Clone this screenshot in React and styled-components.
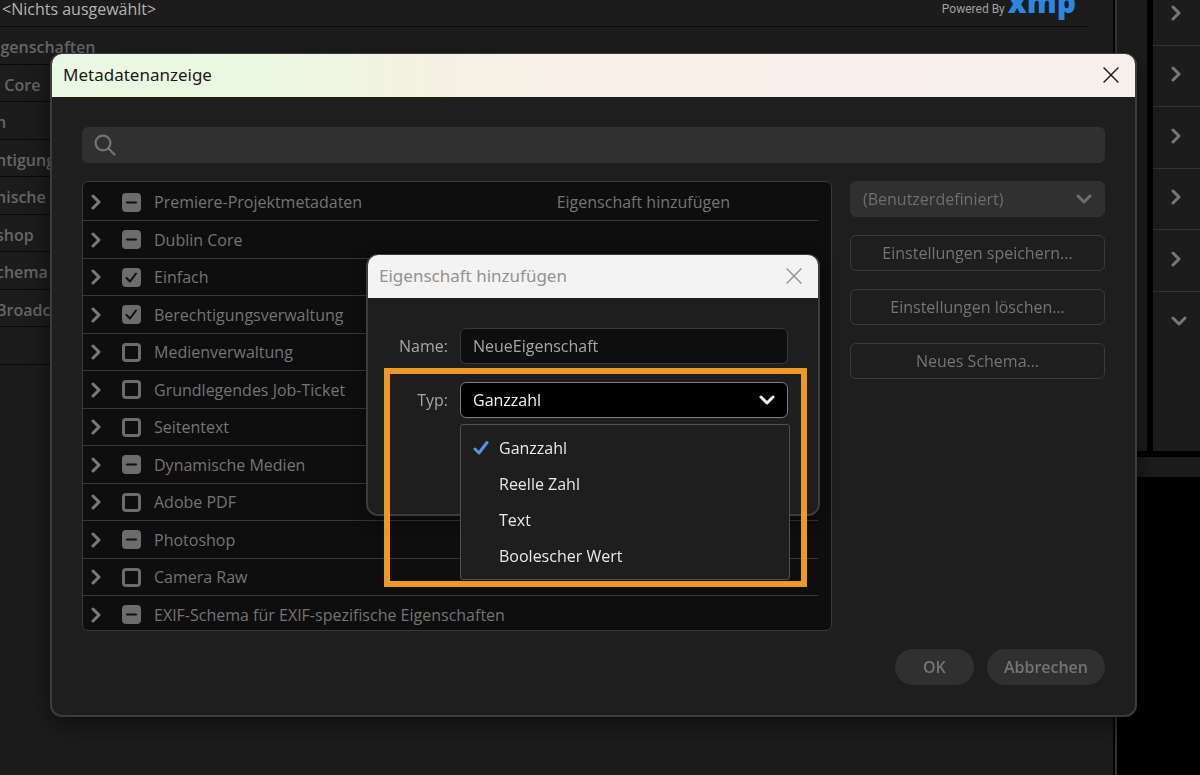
import React, { useState } from 'react';
import styled, { createGlobalStyle, css } from 'styled-components';

const GlobalStyle = createGlobalStyle`
  * {
    box-sizing: border-box;
  }

  body {
    margin: 0;
    overflow: hidden;
    background: #000;
    font-family: 'Open Sans', 'Noto Sans', sans-serif;
    font-size: 16px;
    color: #747474;
  }

  button, input, select {
    font: inherit;
    color: inherit;
    margin: 0;
  }
`;

const BACKGROUND_ROWS = [
  'igenschaften',
  '  Core',
  'n',
  'htigung',
  'nische Medien',
  'shop',
  'chema',
  'Broadcast',
  '',
];

const SCHEMAS = [
  { label: 'Premiere-Projektmetadaten', state: 'mixed', action: 'Eigenschaft hinzufügen' },
  { label: 'Dublin Core', state: 'mixed' },
  { label: 'Einfach', state: 'on' },
  { label: 'Berechtigungsverwaltung', state: 'on' },
  { label: 'Medienverwaltung', state: 'off' },
  { label: 'Grundlegendes Job-Ticket', state: 'off' },
  { label: 'Seitentext', state: 'off' },
  { label: 'Dynamische Medien', state: 'mixed' },
  { label: 'Adobe PDF', state: 'off' },
  { label: 'Photoshop', state: 'mixed' },
  { label: 'Camera Raw', state: 'off' },
  { label: 'EXIF-Schema für EXIF-spezifische Eigenschaften', state: 'mixed' },
];

const TYPES = ['Ganzzahl', 'Reelle Zahl', 'Text', 'Boolescher Wert'];

function Chevron({ down }) {
  return (
    <svg width='16' height='16' viewBox='0 0 16 16' fill='none' stroke='currentColor' strokeWidth='3' strokeLinecap='round' strokeLinejoin='round'>
      <path d={down ? 'M2 5l6 6 6-6' : 'M4 2l6 6-6 6'} />
    </svg>
  );
}

function CloseIcon() {
  return (
    <svg width='16' height='16' viewBox='0 0 16 16' fill='none' stroke='currentColor' strokeWidth='1.4'>
      <path d='M0.6 0.6l14.8 14.8M15.4 0.6L0.6 15.4' />
    </svg>
  );
}

function SchemaRow({ label, state, action }) {
  const [checked, setChecked] = useState(state === 'on');

  return (
    <Row>
      <IconButton type='button' aria-label={`${label} öffnen`}>
        <Chevron />
      </IconButton>
      <CheckLabel>
        <Checkbox
          type='checkbox'
          $mixed={state === 'mixed'}
          checked={checked}
          onChange={() => setChecked(!checked)}
        />
        {label}
      </CheckLabel>
      {action && <LinkButton type='button'>{action}</LinkButton>}
    </Row>
  );
}

function PropertyDialog() {
  const [type, setType] = useState(TYPES[0]);

  return (
    <SmallDialog role='dialog' aria-label='Eigenschaft hinzufügen'>
      <TitleBar $muted>
        Eigenschaft hinzufügen
        <CloseButton type='button' aria-label='Schließen'>
          <CloseIcon />
        </CloseButton>
      </TitleBar>
      <Form>
        <label htmlFor='name'>Name:</label>
        <NameInput id='name' type='text' defaultValue='NeueEigenschaft' />
        <label htmlFor='type'>Typ:</label>
        <SelectWrapper $active>
          <Select id='type' value={type} onChange={e => setType(e.target.value)} $active>
            {TYPES.map(item => <option key={item}>{item}</option>)}
          </Select>
          <Chevron down />
          <Menu role='listbox'>
            {TYPES.map(item => (
              <MenuItem key={item} role='option' aria-selected={item === type} onClick={() => setType(item)}>
                {item === type && (
                  <svg width='16' height='16' viewBox='0 0 16 16' fill='none' stroke='#4f97e3' strokeWidth='3' strokeLinecap='round' strokeLinejoin='round'>
                    <path d='M2 9l4 4 8-10.5' />
                  </svg>
                )}
                <span>{item}</span>
              </MenuItem>
            ))}
          </Menu>
        </SelectWrapper>
      </Form>
      <Highlight />
    </SmallDialog>
  );
}

export default function App() {
  return (
    <>
      <GlobalStyle />
      <Workspace>
        <MetadataPanel>
          <PanelHeader>
            <span>&lt;Nichts ausgewählt&gt;</span>
            <PoweredBy>
              Powered By
              <XmpLogo>xmp</XmpLogo>
            </PoweredBy>
          </PanelHeader>
          {BACKGROUND_ROWS.map((label, i) => <PanelRow key={i}>{label}</PanelRow>)}
        </MetadataPanel>
        <RightSide>
          <RightPanels>
            <Gutter />
            <Sections>
              {[0, 1, 2, 3, 4].map(i => (
                <Section key={i}><Chevron /></Section>
              ))}
              <Section $open><Chevron down /></Section>
            </Sections>
          </RightPanels>
          <Strip />
        </RightSide>
      </Workspace>

      <Overlay>
        <Dialog role='dialog' aria-label='Metadatenanzeige'>
          <TitleBar>
            Metadatenanzeige
            <CloseButton type='button' aria-label='Schließen'>
              <CloseIcon />
            </CloseButton>
          </TitleBar>
          <Content>
            <Search>
              <svg width='22' height='22' viewBox='0 0 22 22' fill='none' stroke='currentColor' strokeWidth='2.2' strokeLinecap='round'>
                <circle cx='9' cy='9' r='7.4' />
                <path d='M14.5 14.5l6 6' />
              </svg>
              <input type='search' aria-label='Suchen' />
            </Search>
            <Columns>
              <SchemaList>
                {SCHEMAS.map(schema => <SchemaRow key={schema.label} {...schema} />)}
              </SchemaList>
              <Side>
                <SelectWrapper>
                  <Select aria-label='Einstellung'>
                    <option>(Benutzerdefiniert)</option>
                  </Select>
                  <Chevron down />
                </SelectWrapper>
                <OutlineButton type='button'>Einstellungen speichern...</OutlineButton>
                <OutlineButton type='button'>Einstellungen löschen…</OutlineButton>
                <OutlineButton type='button'>Neues Schema…</OutlineButton>
              </Side>
            </Columns>
            <Footer>
              <PillButton type='button'>OK</PillButton>
              <PillButton type='button'>Abbrechen</PillButton>
            </Footer>
          </Content>
          <InnerOverlay>
            <PropertyDialog />
          </InnerOverlay>
        </Dialog>
      </Overlay>
    </>
  );
}

const Workspace = styled.div`
  display: flex;
  height: 100vh;
  overflow: hidden;
`;

const MetadataPanel = styled.div`
  flex: 1;
  min-width: 0;
  padding-right: 28px;
  border-right: 2px solid #333;
  background: #1c1c1c;
  box-shadow: inset -2px 0 0 #050505;
`;

const PanelHeader = styled.div`
  display: flex;
  align-items: flex-start;
  justify-content: space-between;
  height: 27px;
  padding-left: 2px;
  padding-right: 11px;
  border-bottom: 1px solid #0a0a0a;
  line-height: 18px;
  color: #b4b4b4;
`;

const PoweredBy = styled.div`
  display: flex;
  gap: 3px;
  font-family: Roboto, sans-serif;
  font-size: 12px;
  color: #a0a0a0;
`;

const XmpLogo = styled.span`
  font-family: 'Open Sans', sans-serif;
  font-size: 30px;
  font-weight: 800;
  line-height: 4px;
  color: #2d86e0;
`;

const PanelRow = styled.div`
  height: 38px;
  border-bottom: 1px solid #0a0a0a;
  line-height: 40px;
  text-indent: -4px;
  white-space: pre;
  font-weight: 600;
  color: #666;

  &:nth-child(odd) {
    height: 37px;
  }
`;

const RightSide = styled.div`
  display: flex;
  flex-direction: column;
  width: 83px;
`;

const RightPanels = styled.div`
  display: flex;
  height: 451px;
`;

const Gutter = styled.div`
  width: 36px;
  border-right: 6px solid #000;
  background: #1c1c1c;
`;

const Sections = styled.div`
  flex: 1;
  background: #1c1c1c;
`;

const Section = styled.div`
  display: flex;
  align-items: center;
  height: 62px;
  padding: 0 0 4px 16px;
  border-bottom: 1px solid #333;
  color: #777;

  &:nth-child(even) {
    height: 61px;
  }

  &:first-child {
    height: 46px;
    padding-bottom: 20px;
  }

  ${props => props.$open && css`
    padding-left: 18px;
    border-bottom: none;
  `}
`;

const Strip = styled.div`
  height: 26px;
  border-top: 6px solid #000;
  background: #1c1c1c;
`;

const Overlay = styled.div`
  position: fixed;
  inset: 0;
  display: flex;
  padding: 53px 63px 58px 50px;
`;

const dialogFrame = css`
  display: flex;
  flex-direction: column;
  border: 2px solid #3c3c3c;
  border-top-width: 1px;
  border-radius: 12px;
  background: #1e1e1e;
`;

const Dialog = styled.div`
  ${dialogFrame}
  position: relative;
  flex: 1;
  box-shadow: 0 8px 24px rgba(0, 0, 0, 0.5);
`;

const TitleBar = styled.div`
  display: flex;
  align-items: center;
  justify-content: space-between;
  height: 43px;
  padding: 0 16px 2px 11px;
  border-radius: 10px 10px 0 0;
  font-family: 'Noto Sans', sans-serif;
  font-size: 17px;
  color: ${props => (props.$muted ? '#929292' : '#1a1a1a')};
  background: ${props => (props.$muted ? '#f3f3f3' : 'linear-gradient(90deg, #e9f8e4 0%, #ebf8e2 19%, #f4f2e3 34%, #f9f0e9 50%, #f8f0ed 100%)')};
`;

const CloseButton = styled.button`
  display: flex;
  padding: 0;
  border: none;
  background: none;
`;

const Content = styled.div`
  display: flex;
  flex: 1;
  flex-direction: column;
  padding: 30px 30px;
`;

const Search = styled.div`
  display: flex;
  align-items: center;
  gap: 10px;
  height: 36px;
  padding: 0 12px;
  border-radius: 6px;
  background: #303030;

  input {
    flex: 1;
    border: none;
    outline: none;
    background: none;
  }
`;

const Columns = styled.div`
  display: flex;
  gap: 18px;
  margin-top: 18px;
`;

const SchemaList = styled.div`
  flex: 1;
  height: 450px;
  overflow: hidden;
  padding: 2px 13px 0 0;
  border: 1px solid #3a3a3a;
  border-radius: 6px;
  background: #0e0e0e;
`;

const Row = styled.div`
  display: flex;
  align-items: center;
  height: 37px;
  border-bottom: 1px solid #363636;

  &:nth-child(even) {
    height: 38px;
  }
`;

const IconButton = styled.button`
  display: flex;
  padding: 0;
  margin-left: 6px;
  border: none;
  background: none;
  color: #7a7a7a;
`;

const CheckLabel = styled.label`
  display: flex;
  flex: 1;
  align-items: center;
  gap: 13px;
  margin-left: 17px;
`;

const mixedMark = "url(\"data:image/svg+xml,%3Csvg xmlns='http://www.w3.org/2000/svg' viewBox='0 0 19 19'%3E%3Cpath d='M5 9.5h9' stroke='%230e0e0e' stroke-width='2' stroke-linecap='round'/%3E%3C/svg%3E\")";
const checkMark = "url(\"data:image/svg+xml,%3Csvg xmlns='http://www.w3.org/2000/svg' viewBox='0 0 19 19'%3E%3Cpath d='M4.5 10l3.5 3.5 6-8' fill='none' stroke='%230e0e0e' stroke-width='2' stroke-linecap='round' stroke-linejoin='round'/%3E%3C/svg%3E\")";

const Checkbox = styled.input`
  appearance: none;
  width: 19px;
  height: 19px;
  border: 3px solid #6c6c6c;
  border-radius: 4px;
  background-origin: border-box;

  ${props => props.$mixed && css`
    background-color: #6c6c6c;
    background-image: ${mixedMark};
  `}

  &:checked {
    background-color: #6c6c6c;
    background-image: ${checkMark};
  }
`;

const LinkButton = styled.button`
  padding: 0;
  margin-right: 88px;
  border: none;
  background: none;
`;

const Side = styled.div`
  display: flex;
  flex-direction: column;
  gap: 18px;
  width: 255px;
`;

const SelectWrapper = styled.div`
  position: relative;
  color: ${props => (props.$active ? '#f2f2f2' : '#6e6e6e')};

  > svg {
    position: absolute;
    right: 13px;
    top: 10px;
    pointer-events: none;
  }
`;

const Select = styled.select`
  appearance: none;
  width: 100%;
  height: 36px;
  padding: 0 12px;
  border: 1px solid ${props => (props.$active ? '#7c7c7c' : '#303030')};
  border-radius: 6px;
  outline: none;
  background: ${props => (props.$active ? '#000' : '#303030')};
`;

const OutlineButton = styled.button`
  height: 36px;
  border: 1px solid #3a3a3a;
  border-radius: 6px;
  background: none;
`;

const Footer = styled.div`
  display: flex;
  justify-content: flex-end;
  gap: 13px;
  margin-top: 18px;
`;

const PillButton = styled.button`
  min-width: 79px;
  height: 36px;
  padding: 0 17px;
  border: none;
  border-radius: 18px;
  background: #303030;
  font-size: 16px;
  font-weight: 600;
`;

const InnerOverlay = styled.div`
  position: absolute;
  inset: 0;
  display: flex;
  align-items: center;
  justify-content: center;
  padding: 1px 1px 0 0;
`;

const SmallDialog = styled.div`
  ${dialogFrame}
  position: relative;
  width: 454px;
  height: 262px;
  box-shadow: 0 4px 16px rgba(0, 0, 0, 0.4);
`;

const Form = styled.div`
  display: grid;
  grid-template-columns: 80px 328px;
  align-items: center;
  gap: 18px 12px;
  padding-top: 30px;
  color: #a6a6a6;

  label {
    text-align: right;
  }
`;

const NameInput = styled.input`
  height: 36px;
  padding: 0 12px;
  border: 1px solid #363636;
  border-radius: 6px;
  outline: none;
  background: #0e0e0e;
`;

const Menu = styled.ul`
  position: absolute;
  top: 42px;
  left: 0;
  z-index: 1;
  width: 330px;
  margin: 0;
  padding: 5px 0;
  border: 1px solid #505050;
  border-radius: 3px;
  background: #1e1e1e;
  list-style: none;
`;

const MenuItem = styled.li`
  display: flex;
  align-items: center;
  height: 36px;
  padding-left: 12px;
  color: #e8e8e8;

  span {
    margin-left: auto;
    width: 290px;
  }
`;

/* callout frame over the type field and its open menu */
const Highlight = styled.div`
  position: absolute;
  top: 113px;
  left: 16px;
  width: 423px;
  height: 219px;
  border: 6px solid #ec9a24;
  pointer-events: none;
`;
